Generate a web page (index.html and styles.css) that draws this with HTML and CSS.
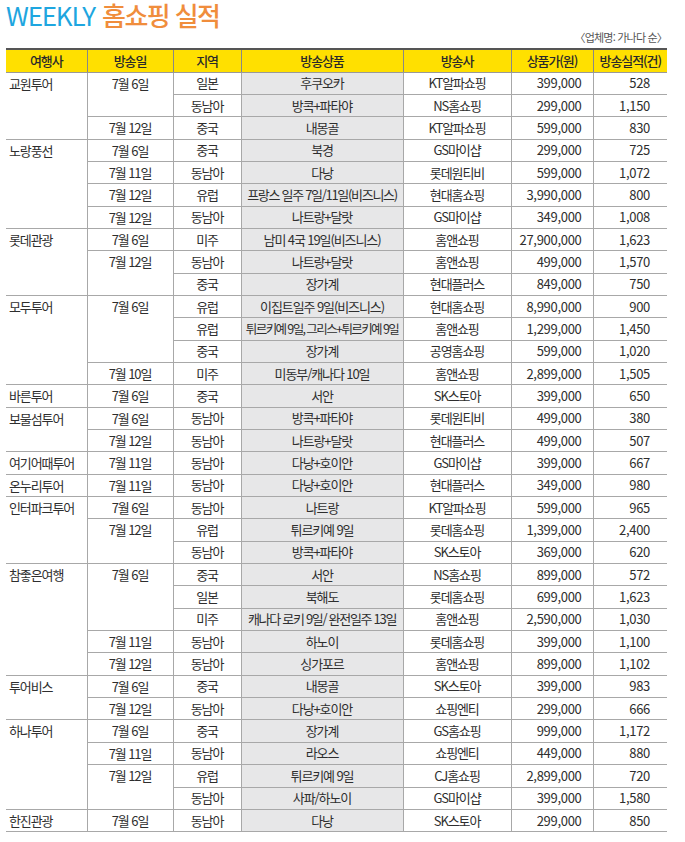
FILE: index.html
```html
<!DOCTYPE html>
<html lang="ko">
<head>
<meta charset="utf-8">
<link rel="stylesheet" href="styles.css">
</head>
<body>
<div class="page">
  <h1 class="title"><span class="en">WEEKLY</span> <span class="ko">홈쇼핑 실적</span></h1>
  <div class="note">〈업체명: 가나다 순〉</div>
  <table class="sales">
    <colgroup>
      <col class="c1"><col class="c2"><col class="c3"><col class="c4"><col class="c5"><col class="c6"><col class="c7">
    </colgroup>
    <thead>
      <tr><th>여행사</th><th>방송일</th><th>지역</th><th>방송상품</th><th>방송사</th><th>상품가(원)</th><th>방송실적(건)</th></tr>
    </thead>
    <tbody>
      <tr><td class="co" rowspan="3">교원투어</td><td class="dt" rowspan="2">7월 6일</td><td>일본</td><td class="pr">후쿠오카</td><td>KT알파쇼핑</td><td class="num">399,000</td><td class="cnt">528</td></tr>
      <tr><td>동남아</td><td class="pr">방콕+파타야</td><td>NS홈쇼핑</td><td class="num">299,000</td><td class="cnt">1,150</td></tr>
      <tr><td class="dt">7월 12일</td><td>중국</td><td class="pr">내몽골</td><td>KT알파쇼핑</td><td class="num">599,000</td><td class="cnt">830</td></tr>

      <tr><td class="co" rowspan="4">노랑풍선</td><td class="dt">7월 6일</td><td>중국</td><td class="pr">북경</td><td>GS마이샵</td><td class="num">299,000</td><td class="cnt">725</td></tr>
      <tr><td class="dt">7월 11일</td><td>동남아</td><td class="pr">다낭</td><td>롯데원티비</td><td class="num">599,000</td><td class="cnt">1,072</td></tr>
      <tr><td class="dt">7월 12일</td><td>유럽</td><td class="pr tight">프랑스 일주 7일/11일(비즈니스)</td><td>현대홈쇼핑</td><td class="num">3,990,000</td><td class="cnt">800</td></tr>
      <tr><td class="dt">7월 12일</td><td>동남아</td><td class="pr">나트랑+달랏</td><td>GS마이샵</td><td class="num">349,000</td><td class="cnt">1,008</td></tr>

      <tr><td class="co" rowspan="3">롯데관광</td><td class="dt">7월 6일</td><td>미주</td><td class="pr">남미 4국 19일(비즈니스)</td><td>홈앤쇼핑</td><td class="num">27,900,000</td><td class="cnt">1,623</td></tr>
      <tr><td class="dt" rowspan="2">7월 12일</td><td>동남아</td><td class="pr">나트랑+달랏</td><td>홈앤쇼핑</td><td class="num">499,000</td><td class="cnt">1,570</td></tr>
      <tr><td>중국</td><td class="pr">장가계</td><td>현대플러스</td><td class="num">849,000</td><td class="cnt">750</td></tr>

      <tr><td class="co" rowspan="4">모두투어</td><td class="dt" rowspan="3">7월 6일</td><td>유럽</td><td class="pr">이집트일주 9일(비즈니스)</td><td>현대홈쇼핑</td><td class="num">8,990,000</td><td class="cnt">900</td></tr>
      <tr><td>유럽</td><td class="pr tighter">튀르키예 9일, 그리스+튀르키예 9일</td><td>홈앤쇼핑</td><td class="num">1,299,000</td><td class="cnt">1,450</td></tr>
      <tr><td>중국</td><td class="pr">장가계</td><td>공영홈쇼핑</td><td class="num">599,000</td><td class="cnt">1,020</td></tr>
      <tr><td class="dt">7월 10일</td><td>미주</td><td class="pr">미동부/캐나다 10일</td><td>홈앤쇼핑</td><td class="num">2,899,000</td><td class="cnt">1,505</td></tr>

      <tr><td class="co">바른투어</td><td class="dt">7월 6일</td><td>중국</td><td class="pr">서안</td><td>SK스토아</td><td class="num">399,000</td><td class="cnt">650</td></tr>

      <tr><td class="co" rowspan="2">보물섬투어</td><td class="dt">7월 6일</td><td>동남아</td><td class="pr">방콕+파타야</td><td>롯데원티비</td><td class="num">499,000</td><td class="cnt">380</td></tr>
      <tr><td class="dt">7월 12일</td><td>동남아</td><td class="pr">나트랑+달랏</td><td>현대플러스</td><td class="num">499,000</td><td class="cnt">507</td></tr>

      <tr><td class="co">여기어때투어</td><td class="dt">7월 11일</td><td>동남아</td><td class="pr">다낭+호이안</td><td>GS마이샵</td><td class="num">399,000</td><td class="cnt">667</td></tr>
      <tr><td class="co">온누리투어</td><td class="dt">7월 11일</td><td>동남아</td><td class="pr">다낭+호이안</td><td>현대플러스</td><td class="num">349,000</td><td class="cnt">980</td></tr>

      <tr><td class="co" rowspan="3">인터파크투어</td><td class="dt">7월 6일</td><td>동남아</td><td class="pr">나트랑</td><td>KT알파쇼핑</td><td class="num">599,000</td><td class="cnt">965</td></tr>
      <tr><td class="dt" rowspan="2">7월 12일</td><td>유럽</td><td class="pr">튀르키예 9일</td><td>롯데홈쇼핑</td><td class="num">1,399,000</td><td class="cnt">2,400</td></tr>
      <tr><td>동남아</td><td class="pr">방콕+파타야</td><td>SK스토아</td><td class="num">369,000</td><td class="cnt">620</td></tr>

      <tr><td class="co" rowspan="5">참좋은여행</td><td class="dt" rowspan="3">7월 6일</td><td>중국</td><td class="pr">서안</td><td>NS홈쇼핑</td><td class="num">899,000</td><td class="cnt">572</td></tr>
      <tr><td>일본</td><td class="pr">북해도</td><td>롯데홈쇼핑</td><td class="num">699,000</td><td class="cnt">1,623</td></tr>
      <tr><td>미주</td><td class="pr tight">캐나다 로키 9일/ 완전일주 13일</td><td>홈앤쇼핑</td><td class="num">2,590,000</td><td class="cnt">1,030</td></tr>
      <tr><td class="dt">7월 11일</td><td>동남아</td><td class="pr">하노이</td><td>롯데홈쇼핑</td><td class="num">399,000</td><td class="cnt">1,100</td></tr>
      <tr><td class="dt">7월 12일</td><td>동남아</td><td class="pr">싱가포르</td><td>홈앤쇼핑</td><td class="num">899,000</td><td class="cnt">1,102</td></tr>

      <tr><td class="co" rowspan="2">투어비스</td><td class="dt">7월 6일</td><td>중국</td><td class="pr">내몽골</td><td>SK스토아</td><td class="num">399,000</td><td class="cnt">983</td></tr>
      <tr><td class="dt">7월 12일</td><td>동남아</td><td class="pr">다낭+호이안</td><td>쇼핑엔티</td><td class="num">299,000</td><td class="cnt">666</td></tr>

      <tr><td class="co" rowspan="4">하나투어</td><td class="dt">7월 6일</td><td>중국</td><td class="pr">장가계</td><td>GS홈쇼핑</td><td class="num">999,000</td><td class="cnt">1,172</td></tr>
      <tr><td class="dt">7월 11일</td><td>동남아</td><td class="pr">라오스</td><td>쇼핑엔티</td><td class="num">449,000</td><td class="cnt">880</td></tr>
      <tr><td class="dt" rowspan="2">7월 12일</td><td>유럽</td><td class="pr">튀르키예 9일</td><td>CJ홈쇼핑</td><td class="num">2,899,000</td><td class="cnt">720</td></tr>
      <tr><td>동남아</td><td class="pr">사파/하노이</td><td>GS마이샵</td><td class="num">399,000</td><td class="cnt">1,580</td></tr>

      <tr><td class="co">한진관광</td><td class="dt">7월 6일</td><td>동남아</td><td class="pr">다낭</td><td>SK스토아</td><td class="num">299,000</td><td class="cnt">850</td></tr>
    </tbody>
  </table>
</div>
</body>
</html>
```
FILE: styles.css
```css
* { box-sizing: border-box; }
html, body { margin: 0; padding: 0; background: #fff; }
body {
  font-family: "Noto Sans CJK KR", "Noto Sans", sans-serif;
  color: #2e2e2e;
}
.page {
  width: 685px;
  padding: 0 18px 0 6px;
}
.title {
  margin: 0;
  padding-top: 0;
  font-size: 26px;
  line-height: 30px;
  font-weight: 500;
  white-space: nowrap;
}
.title .en { color: #1ea6e0; font-weight: 400; letter-spacing: -1.2px; }
.title .ko { color: #f08d3c; letter-spacing: -1.6px; }
.note {
  text-align: right;
  font-size: 11px;
  line-height: 14px;
  color: #555;
  letter-spacing: -0.8px;
  margin-top: 0;
  margin-right: 0;
}
.sales {
  width: 661px;
  margin-top: 4px;
  border-collapse: collapse;
  table-layout: fixed;
  font-size: 13px;
  letter-spacing: -1.1px;
}
.c1 { width: 81px; }
.c2 { width: 86px; }
.c3 { width: 68px; }
.c4 { width: 162px; }
.c5 { width: 108px; }
.c6 { width: 82px; }
.c7 { width: 74px; }
.sales thead tr { height: 23px; }
.sales th {
  background: #ffe000;
  font-weight: 500;
  color: #2a2a2a;
  border-top: 2px solid #555;
  border-bottom: 1px solid #999;
  border-left: 1px solid #888;
  padding: 0;
  line-height: 20px;
}
.sales th:first-child { border-left: none; }
.sales tbody tr { height: 22.35px; }
.sales td {
  padding: 0;
  line-height: 20px;
  text-align: center;
  vertical-align: middle;
  border-bottom: 1px solid #a8a8a8;
  border-left: 1px solid #a8a8a8;
  white-space: nowrap;
}
.sales td.co {
  text-align: left;
  padding-left: 3px;
  vertical-align: top;
  padding-top: 1px;
  border-left: none;
}
.sales td.dt {
  vertical-align: top;
  padding-top: 1px;
}
.sales td.pr { background: #e7e7e8; }
.sales td.tight { letter-spacing: -1.3px; }
.sales td.tighter { letter-spacing: -1.6px; font-size: 12.5px; }
.sales td.num { text-align: right; padding-right: 11px; letter-spacing: -0.3px; }
.sales td.cnt { text-align: right; padding-right: 17px; letter-spacing: -0.3px; }
```
